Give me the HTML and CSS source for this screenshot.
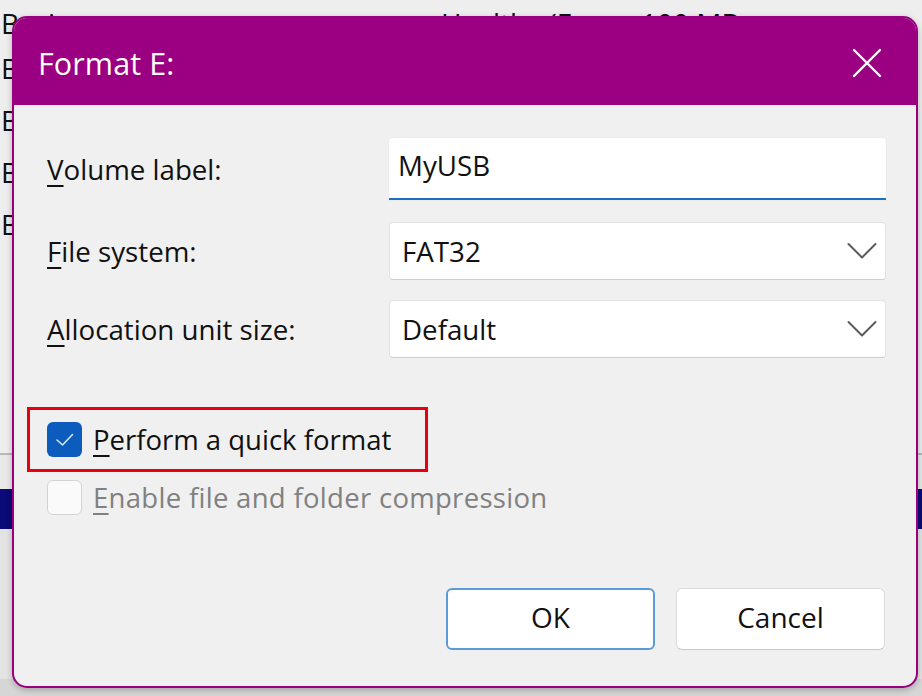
FILE: index.html
```html
<!DOCTYPE html>
<html lang="en">
<head>
<meta charset="utf-8">
<title>Format E:</title>
<link rel="stylesheet" href="styles.css">
</head>
<body>
<div class="backdrop">
  <div class="vol-list">
    <div class="vol-row first"><span class="c1">Basic</span><span class="c2">Healthy (E...</span><span class="c3">100 MB</span></div>
    <div class="vol-row"><span class="c1">B</span></div>
    <div class="vol-row"><span class="c1">B</span></div>
    <div class="vol-row"><span class="c1">B</span></div>
    <div class="vol-row"><span class="c1">B</span></div>
  </div>
  <div class="disk-map">
    <div class="map-bar"></div>
    <div class="map-body"></div>
  </div>
  <div class="bottom-strip"></div>
</div>

<div class="dialog">
  <div class="titlebar">
    <span class="title">Format E:</span>
    <svg class="close" viewBox="0 0 30 30" width="30" height="30" aria-hidden="true">
      <path d="M2 2 L28 28 M28 2 L2 28" stroke="#ffffff" stroke-width="2.4" stroke-linecap="round" fill="none"/>
    </svg>
  </div>
  <div class="content">
    <div class="form">
      <div class="row row-text">
        <span class="label"><u>V</u>olume label:</span>
        <div class="field textbox">MyUSB</div>
      </div>
      <div class="row row-combo">
        <span class="label"><u>F</u>ile system:</span>
        <div class="field combo">
          <span>FAT32</span>
          <svg class="chev" viewBox="0 0 30 18" width="30" height="18" aria-hidden="true">
            <path d="M1.5 2 L15 15.5 L28.5 2" stroke="#5a5a5a" stroke-width="2" fill="none" stroke-linecap="round" stroke-linejoin="round"/>
          </svg>
        </div>
      </div>
      <div class="row row-combo">
        <span class="label"><u>A</u>llocation unit size:</span>
        <div class="field combo">
          <span>Default</span>
          <svg class="chev" viewBox="0 0 30 18" width="30" height="18" aria-hidden="true">
            <path d="M1.5 2 L15 15.5 L28.5 2" stroke="#5a5a5a" stroke-width="2" fill="none" stroke-linecap="round" stroke-linejoin="round"/>
          </svg>
        </div>
      </div>
    </div>

    <div class="options">
      <div class="option highlight">
        <span class="check checked">
          <svg viewBox="0 0 35 35" width="35" height="35" aria-hidden="true">
            <path d="M10 18 L15.5 23 L25.5 12.5" stroke="#d8e6f7" stroke-width="1.6" fill="none" stroke-linecap="round" stroke-linejoin="round"/>
          </svg>
        </span>
        <span class="opt-text"><u>P</u>erform a quick format</span>
      </div>
      <div class="option disabled">
        <span class="check"></span>
        <span class="opt-text"><u>E</u>nable file and folder compression</span>
      </div>
    </div>

    <div class="buttons">
      <button class="btn btn-default">OK</button>
      <button class="btn">Cancel</button>
    </div>
  </div>
</div>
</body>
</html>
```

FILE: styles.css
```css
* { box-sizing: border-box; }

html, body {
  margin: 0;
  padding: 0;
}

body {
  width: 922px;
  height: 696px;
  overflow: hidden;
  position: relative;
  font-family: "Open Sans", "Noto Sans", "Liberation Sans", sans-serif;
  color: #111111;
  background: #e9e9e9;
}

/* ---------- background window ---------- */
.backdrop {
  height: 696px;
  display: flex;
  flex-direction: column;
}

.vol-list {
  height: 455px;
  background: #eeeeee;
  border-bottom: 2px solid #b9b9b9;
}

.vol-row {
  height: 52px;
  display: flex;
  align-items: center;
  font-size: 28px;
  line-height: 1;
}

.vol-row.first {
  height: 42px;
  padding-top: 3px;
}

.vol-row .c1 {
  padding-left: 1px;
  width: 441px;
  flex: none;
}

.vol-row .c2 {
  width: 200px;
}

.disk-map {
  display: flex;
  flex-direction: column;
}

.map-bar {
  margin-top: 34px;
  height: 40px;
  background: #0a0a78;
}

.map-body {
  height: 150px;
  background: #e4e4e4;
}

.bottom-strip {
  flex: 1;
  background: #d6d6d6;
}

/* ---------- dialog window ---------- */
.dialog {
  position: absolute;
  left: 12px;
  top: 16px;
  width: 906px;
  height: 672px;
  border: 2px solid #990080;
  border-radius: 15px;
  background: #f0f0f0;
  overflow: hidden;
  display: flex;
  flex-direction: column;
  box-shadow: 0 2px 6px rgba(0, 0, 0, 0.25);
}

.titlebar {
  height: 87px;
  flex: none;
  background: #9b0082;
  display: flex;
  align-items: center;
  justify-content: space-between;
  padding: 0 34px 0 24px;
}

.title {
  color: #ffffff;
  font-size: 30.5px;
  font-weight: 400;
  letter-spacing: 0.1px;
  padding-top: 2px;
}

.close {
  display: block;
  margin-top: 2px;
}

.content {
  flex: 1;
  padding: 33px 30px 0 33px;
  display: flex;
  flex-direction: column;
}

.form {
  display: flex;
  flex-direction: column;
  gap: 20px;
}

.row {
  display: flex;
  align-items: center;
}

.label {
  width: 342px;
  font-size: 27.7px;
  flex: none;
}

u {
  text-decoration-thickness: 2px;
  text-underline-offset: 5px;
}

.field {
  flex: 1;
  background: #ffffff;
  display: flex;
  align-items: center;
  font-size: 27.7px;
}

.textbox {
  height: 62px;
  padding-left: 9px;
  padding-bottom: 6px;
  border-radius: 4px 4px 0 0;
  border-bottom: 2px solid #1f6fc0;
  box-shadow: 0 0 0 1px #ececec;
}

.row-text + .row-combo {
  margin-top: 2px;
}

.combo {
  height: 58px;
  padding: 0 8px 0 12px;
  justify-content: space-between;
  border-radius: 4px;
  border: 1px solid #e3e3e3;
  border-bottom-color: #cdcdcd;
}

.chev {
  display: block;
}

/* ---------- checkboxes ---------- */
.options {
  margin-top: 49px;
  display: flex;
  flex-direction: column;
}

.option {
  display: flex;
  align-items: center;
  gap: 11px;
  font-size: 27.5px;
}

.highlight {
  margin-left: -20px;
  width: 401px;
  height: 65px;
  border: 3px solid #e8000f;
  padding-left: 17px;
}

.check {
  width: 35px;
  height: 35px;
  flex: none;
  border-radius: 6px;
  background: #fafafa;
  border: 1.5px solid #d3d3d3;
  display: block;
}

.check.checked {
  background: #0b5cbd;
  border: none;
}

.check svg {
  display: block;
}

.disabled {
  margin-top: 8px;
  color: #808080;
}

.disabled .opt-text {
  letter-spacing: 0.3px;
}

.opt-text {
  line-height: 1.2;
}

/* ---------- buttons ---------- */
.buttons {
  margin-top: 73px;
  display: flex;
  justify-content: flex-end;
  gap: 21px;
  padding-right: 1px;
}

.btn {
  width: 209px;
  height: 62px;
  font-family: inherit;
  font-size: 28px;
  color: #111111;
  background: #ffffff;
  border: 1px solid #dadada;
  border-bottom-color: #c8c8c8;
  border-radius: 6px;
  padding: 0 0 4px 0;
}

.btn-default {
  border: 2px solid #5b9bd8;
}
```
